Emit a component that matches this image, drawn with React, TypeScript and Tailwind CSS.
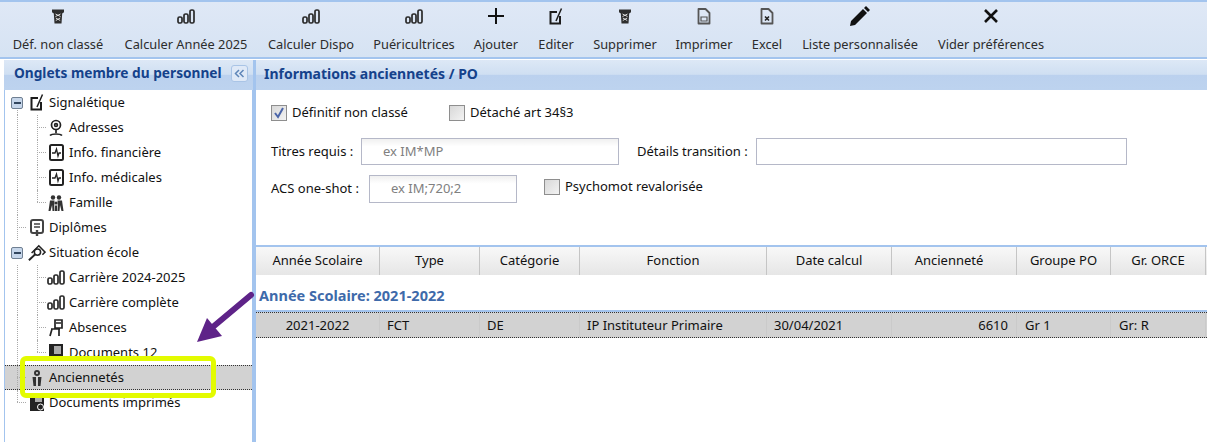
import React from "react";

const font = { fontFamily: '"Noto Sans", sans-serif' };

function Bars() {
  return (
    <svg width="18" height="15" viewBox="0 0 18 15" fill="none" stroke="#2a2a2a" strokeWidth="1.7">
      <rect x="1" y="8" width="4" height="6" rx="1.6" />
      <rect x="7" y="5" width="4" height="9" rx="1.6" />
      <rect x="13" y="1" width="4" height="13" rx="1.6" />
    </svg>
  );
}
function Trash() {
  return (
    <svg width="12" height="15" viewBox="0 0 12 15" fill="#2e2e2e">
      <path d="M0 0.5h12v2.8l-1.8 1.2-.7 10h-7l-.7-10L0 3.300z" />
      <path d="M3.500 5l5 2.500M8.500 5l-5 2.500M3.800 9l4.400 2.500M8.200 9l-4.400 2.500" stroke="#d8d8d8" strokeWidth="1" />
    </svg>
  );
}
function EditIcon() {
  return (
    <svg width="15" height="17" viewBox="0 0 15 17" fill="none" stroke="#1c1c1c" strokeWidth="2">
      <path d="M8 4H1.500v11.500h9.500V8" />
      <path d="M7 13L12.500 0.500" strokeWidth="1.500" />
    </svg>
  );
}
function DocIcon({ kind }: { kind: "pdf" | "xls" }) {
  return (
    <svg width="14" height="17" viewBox="0 0 14 17" fill="none" stroke="#555" strokeWidth="1.800">
      <path d="M1.500 1h7l4 4v10.500h-11z" strokeLinejoin="round" />
      {kind === "pdf" ? <path d="M4 9h6v4H4z" strokeWidth="1.200" /> : <path d="M5 8.500l4 4M9 8.500l-4 4" strokeWidth="1.600" stroke="#222" />}
    </svg>
  );
}

type ToolItem = { label: string; w: string; icon: React.ReactNode };
const tools: ToolItem[] = [
  { label: "Déf. non classé", w: "w-[112px]", icon: <Trash /> },
  { label: "Calculer Année 2025", w: "w-[144px]", icon: <Bars /> },
  { label: "Calculer Dispo", w: "w-[106px]", icon: <Bars /> },
  { label: "Puéricultrices", w: "w-[100px]", icon: <Bars /> },
  { label: "Ajouter", w: "w-[64px]", icon: <svg width="16" height="16" viewBox="0 0 16 16" stroke="#111" strokeWidth="2"><path d="M8 0v16M0 8h16" /></svg> },
  { label: "Editer", w: "w-[56px]", icon: <EditIcon /> },
  { label: "Supprimer", w: "w-[82px]", icon: <Trash /> },
  { label: "Imprimer", w: "w-[76px]", icon: <DocIcon kind="pdf" /> },
  { label: "Excel", w: "w-[50px]", icon: <DocIcon kind="xls" /> },
  { label: "Liste personnalisée", w: "w-[136px]", icon: <svg width="20" height="20" viewBox="0 0 20 20" fill="#111"><path d="M0 20l1-5L13 3l4 4L5 19zM14 2l2-2 4 4-2 2z" /></svg> },
  { label: "Vider préférences", w: "w-[126px]", icon: <svg width="14" height="14" viewBox="0 0 14 14" stroke="#111" strokeWidth="2.600"><path d="M1 1l12 12M13 1L1 13" /></svg> },
];

function Toolbar() {
  return (
    <div className="flex h-[57px] items-start border-t-2 border-[#a3c4ee] bg-gradient-to-b from-[#dfe8f6] to-[#d6e3f3] pl-[2px]">
      {tools.map((t) => (
        <div key={t.label} className={`${t.w} flex shrink-0 flex-col items-center`}>
          <div className="flex h-[28px] items-center justify-center">{t.icon}</div>
          <div className="mt-[4px] whitespace-nowrap text-[12.8px] leading-[20px] text-[#2c2c2c]">{t.label}</div>
        </div>
      ))}
    </div>
  );
}

function Sq() {
  return (
    <span className="flex h-[12px] w-[12px] items-center justify-center rounded-[2px] border border-[#6f7f92] bg-[#c6d6ea]">
      <span className="h-[2px] w-[7px] bg-[#33475f]" />
    </span>
  );
}

const ico = { fill: "none", stroke: "#222", strokeWidth: 1.7 };
function Pin() {
  return <svg width="16" height="18" viewBox="0 0 16 18" {...ico}><circle cx="8" cy="6" r="4.500" /><circle cx="8" cy="6" r="1.400" /><path d="M8 11v3M2 16.500c2-2 10-2 12 0" /></svg>;
}
function Medic() {
  return <svg width="15" height="17" viewBox="0 0 15 17" {...ico}><rect x="1" y="1" width="13" height="15" rx="1.500" strokeWidth="2" /><path d="M3 9h3l1.500-4 1.500 7 1-3h2" strokeWidth="1.300" /></svg>;
}
function Family() {
  return <svg width="18" height="18" viewBox="0 0 18 18" fill="#333"><circle cx="6" cy="3.500" r="2.200" /><circle cx="12" cy="3.500" r="2.200" /><circle cx="9" cy="9" r="1.600" /><path d="M3 6.500h4.500L7 17H5.500l-.4-6L3.500 17H1.500zM10.500 6.500H15l1.500 10.500h-2L13 11l-.5 6H11zM8 11.500h2l.5 5.500h-3z" /></svg>;
}
function Diploma() {
  return <svg width="14" height="18" viewBox="0 0 14 18" {...ico} stroke="#444"><rect x="1" y="1" width="12" height="13" rx="2" strokeWidth="2" /><path d="M4 5h6M4 8h6" strokeWidth="1.300" /><path d="M7 11v6" strokeWidth="2.400" /></svg>;
}
function House() {
  return <svg width="20" height="18" viewBox="0 0 20 18" {...ico}><path d="M4 9l8-8 7 7-3 3" /><circle cx="10.500" cy="8" r="3.500" /><path d="M8 10.500L1 17" strokeWidth="2.200" /></svg>;
}
function Chair() {
  return <svg width="16" height="18" viewBox="0 0 16 18" {...ico}><path d="M7 1h7v8H7zM8 4h5M3 10h9M4 10l-2 7M11 10v7" /></svg>;
}
function Folder() {
  return <svg width="14" height="17" viewBox="0 0 14 17" fill="#222"><path d="M0 0h14v17H0z" /><path d="M5 2h7v8H5z" fill="#aaa" /></svg>;
}
function Medal() {
  return <svg width="12" height="18" viewBox="0 0 12 18" fill="#333"><circle cx="6" cy="4" r="3" /><circle cx="6" cy="4" r="1" fill="#ddd" /><path d="M1.500 8h3.500v9H2.500zM7 8h3.500l-1 9H7z" /></svg>;
}
function Printed() {
  return <svg width="14" height="17" viewBox="0 0 14 17" fill="#222"><path d="M0 0h14v17H0z" /><path d="M5 2h7v6H5z" fill="#aaa" /><circle cx="10.500" cy="13" r="3" stroke="#fff" /></svg>;
}

type Row = { label: string; depth: number; icon: React.ReactNode; toggle?: boolean; selected?: boolean; outer: "full" | "down" | "up"; inner?: "full" | "up" };
const rows: Row[] = [
  { label: "Signalétique", depth: 0, icon: <EditIcon />, toggle: true, outer: "down" },
  { label: "Adresses", depth: 1, icon: <Pin />, outer: "full", inner: "full" },
  { label: "Info. financière", depth: 1, icon: <Medic />, outer: "full", inner: "full" },
  { label: "Info. médicales", depth: 1, icon: <Medic />, outer: "full", inner: "full" },
  { label: "Famille", depth: 1, icon: <Family />, outer: "full", inner: "up" },
  { label: "Diplômes", depth: 0, icon: <Diploma />, outer: "full" },
  { label: "Situation école", depth: 0, icon: <House />, toggle: true, outer: "full" },
  { label: "Carrière 2024-2025", depth: 1, icon: <Bars />, outer: "full", inner: "full" },
  { label: "Carrière complète", depth: 1, icon: <Bars />, outer: "full", inner: "full" },
  { label: "Absences", depth: 1, icon: <Chair />, outer: "full", inner: "full" },
  { label: "Documents 12", depth: 1, icon: <Folder />, outer: "full", inner: "up" },
  { label: "Anciennetés", depth: 0, icon: <Medal />, selected: true, outer: "full" },
  { label: "Documents imprimés", depth: 0, icon: <Printed />, outer: "up" },
];

const guideSpan = { full: "top-0 bottom-0", down: "top-[18px] bottom-0", up: "top-0 h-[12px]" };

function TreeRow({ r }: { r: Row }) {
  return (
    <div className={`relative flex h-[25px] items-center whitespace-nowrap text-[13px] text-[#111] ${r.selected ? "border-y border-dotted border-[#333] bg-[#d2d2d2]" : ""}`}>
      {!r.toggle && <span className={`absolute left-[12px] w-0 border-l border-dotted border-[#aaa] ${guideSpan[r.outer]}`} />}
      {r.toggle && r.outer === "down" && <span className={`absolute left-[12px] w-0 border-l border-dotted border-[#aaa] ${guideSpan.down}`} />}
      {r.inner && <span className={`absolute left-[32px] w-0 border-l border-dotted border-[#aaa] ${guideSpan[r.inner]}`} />}
      <div className={`flex h-full ${r.depth === 1 ? "w-[60px]" : "w-[40px]"} shrink-0 items-center`}>
        {r.depth === 1 ? (
          <span className="ml-[32px] mr-[1px] h-0 w-[9px] border-t border-dotted border-[#aaa]" />
        ) : r.toggle ? (
          <span className="relative ml-[6px]"><Sq /></span>
        ) : (
          <span className="ml-[12px] h-0 w-[9px] border-t border-dotted border-[#aaa]" />
        )}
        <span className={`flex w-[18px] shrink-0 justify-center ${r.depth === 1 ? "" : "ml-auto mr-[-1px]"}`}>{r.icon}</span>
      </div>
      <span className="ml-[4px]">{r.label}</span>
    </div>
  );
}

function PanelHead({ children }: { children: React.ReactNode }) {
  return (
    <div className="flex h-[30px] items-center bg-[linear-gradient(#dde8f6,#cfdff2_48%,#bbd1ee_50%,#bdd3ef)] pb-[3px] font-bold text-[#15428b]">
      {children}
    </div>
  );
}

function Check({ checked }: { checked?: boolean }) {
  return (
    <span className="flex h-[16px] w-[16px] items-center justify-center border border-[#8e8e8e] bg-gradient-to-br from-[#d8d8d8] to-[#f3f3f3]">
      {checked && <svg width="12" height="12" viewBox="0 0 12 12" fill="none" stroke="#4a64a8" strokeWidth="2"><path d="M2 6l3 4 5-9" /></svg>}
    </span>
  );
}

const cols = [
  { t: "Année Scolaire", v: "2021-2022", w: "w-[124px]", c: "text-center", h: "" },
  { t: "Type", v: "FCT", w: "w-[100px]", c: "text-left pl-[7px]", h: "" },
  { t: "Catégorie", v: "DE", w: "w-[100px]", c: "text-left pl-[7px]", h: "" },
  { t: "Fonction", v: "IP Instituteur Primaire", w: "w-[187px]", c: "text-left pl-[7px]", h: "" },
  { t: "Date calcul", v: "30/04/2021", w: "w-[125px]", c: "text-left pl-[7px]", h: "" },
  { t: "Ancienneté", v: "6610", w: "w-[125px]", c: "text-right pr-[8px]", h: "pr-[10px]" },
  { t: "Groupe PO", v: "Gr 1", w: "w-[94px]", c: "text-left pl-[8px]", h: "" },
  { t: "Gr. ORCE", v: "Gr: R", w: "w-[95px]", c: "text-left pl-[8px]", h: "" },
];

export default function App() {
  return (
    <div style={font} className="relative flex h-[442px] w-[1207px] flex-col overflow-hidden bg-white">
      <Toolbar />
      <div className="h-[3px] border-t-2 border-[#a3c4ee]" />
      <div className="flex min-h-0 flex-1">
        <div className="flex w-[253px] shrink-0 flex-col pl-[4px]">
          <PanelHead>
            <span className="ml-[10px] flex-1 whitespace-nowrap text-[13.7px]">Onglets membre du personnel</span>
            <span className="mr-[5px] flex h-[17px] w-[17px] items-center justify-center rounded-[3px] border border-[#a9c4e6] bg-[#dfe9f7]">
              <svg width="11" height="9" viewBox="0 0 11 9" fill="none" stroke="#5f86b8" strokeWidth="1.500"><path d="M5 1L1.500 4.500 5 8M9.500 1L6 4.500 9.500 8" /></svg>
            </span>
          </PanelHead>
          <div className="flex-1 border-x border-[#a3c4ee]">
            {rows.map((r) => <TreeRow key={r.label} r={r} />)}
          </div>
        </div>
        <div className="flex min-w-0 flex-1 flex-col border-l-[3px] border-[#a3c4ee]">
          <PanelHead><span className="ml-[8px] text-[14px]">Informations anciennetés / PO</span></PanelHead>
          <div className="h-[155px] pl-[15px] pt-[15px] text-[13px] text-[#111]">
            <div className="flex h-[16px] items-center">
              <Check checked /><span className="ml-[5px] w-[157px]">Définitif non classé</span>
              <Check /><span className="ml-[5px]">Détaché art 34§3</span>
            </div>
            <div className="mt-[17px] flex h-[27px] items-center">
              <span className="w-[90px]">Titres requis :</span>
              <div className="flex h-[27px] w-[258px] items-center border border-[#b5b8c8] bg-gradient-to-b from-[#f0f0f0] to-white to-30% pl-[21px] text-[#808080]">ex IM*MP</div>
              <span className="ml-[18px] w-[119px]">Détails transition :</span>
              <div className="h-[27px] w-[371px] border border-[#b5b8c8]" />
            </div>
            <div className="mt-[10px] flex h-[28px] items-center">
              <span className="w-[98px]">ACS one-shot :</span>
              <div className="flex h-[28px] w-[148px] items-center border border-[#b5b8c8] bg-gradient-to-b from-[#f0f0f0] to-white to-30% pl-[21px] text-[#808080]">ex IM;720;2</div>
              <span className="mb-[4px] ml-[27px] flex items-center"><Check /><span className="ml-[5px]">Psychomot revalorisée</span></span>
            </div>
          </div>
          <div className="flex h-[30px] border-t-2 border-[#a3c4ee] bg-gradient-to-b from-[#f8f8f8] to-[#e6e6e6] text-[13px] text-[#111]">
            {cols.map((c) => (
              <div key={c.t} className={`${c.w} ${c.h} flex items-center justify-center border-r border-[#c5c5c5]`}>{c.t}</div>
            ))}
          </div>
          <div className="flex h-[37px] items-center border-b-2 border-[#a3c4ee] pl-[3px] pt-[7px] text-[14.5px] font-bold text-[#3e6aaa]">Année Scolaire: 2021-2022</div>
          <div className="flex h-[26px] items-stretch border-y border-dotted border-[#333] bg-[#d2d2d2] text-[13px] text-[#111]">
            {cols.map((c) => (
              <div key={c.t} className={`${c.w} ${c.c} whitespace-nowrap border-r border-[#cacaca] leading-[24px]`}>{c.v}</div>
            ))}
          </div>
        </div>
      </div>
      <div className="absolute left-[20px] top-[356px] h-[42px] w-[196px] rounded-[6px] border-[5px] border-[#e3fb00]" />
      <svg className="absolute left-[190px] top-[285px]" width="70" height="60" viewBox="0 0 70 60">
        <path d="M61 10L24 41" stroke="#5e2388" strokeWidth="6" fill="none" strokeLinecap="round" />
        <path d="M7 57L17 33 32 51z" fill="#5e2388" />
      </svg>
    </div>
  );
}
